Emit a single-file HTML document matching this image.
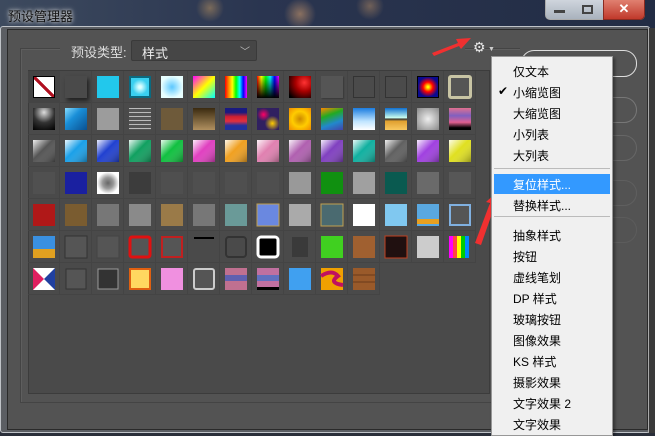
<!DOCTYPE html>
<html><head><meta charset="utf-8"><style>
*{margin:0;padding:0;box-sizing:border-box}
body{width:655px;height:433px;overflow:hidden;position:relative;background:#2a2f3a;font-family:"Liberation Sans","Noto Sans CJK SC",sans-serif}
.a{position:absolute}
.title{left:0;top:0;width:655px;height:30px;background:radial-gradient(circle at 210px 8px,#7a6a5a 0,transparent 14px),radial-gradient(circle at 300px 14px,#8a7060 0,transparent 16px),radial-gradient(circle at 370px 6px,#706058 0,transparent 14px),linear-gradient(90deg,#3d4a5e,#2a3550 40%,#222c44)}
.frame{left:0;top:26px;width:650px;height:407px;background:#5b5e63;border:1px solid #bfc3c8;border-radius:3px}
.bodyp{left:7px;top:29px;width:641px;height:401px;background:#535353;border:1px solid #2a2a2a}
.cell{position:absolute;width:32px;height:32px;border-right:1px solid #444;border-bottom:1px solid #444}
.sw{position:absolute;left:5px;top:5px;width:22px;height:22px}
.mi{position:absolute;left:21px;font-size:12px;color:#000;white-space:nowrap}
</style></head><body>
<div class="a title"></div>
<div class="a" style="left:8px;top:6px;font-size:13px;color:#111;text-shadow:0 0 6px #ccc,0 0 3px #ddd">预设管理器</div>
<div class="a" style="left:545px;top:0;width:100px;height:20px;border:1px solid #aaa;border-top:none;border-radius:0 0 5px 5px;background:linear-gradient(#cfd5dd,#a9b2bd);"></div>
<div class="a" style="left:603px;top:0;width:42px;height:20px;background:linear-gradient(#e08070,#c0392b);border-radius:0 0 5px 0;border:1px solid #8a2a20;border-top:none;color:#fff;font-size:13px;text-align:center;font-weight:bold;line-height:18px">✕</div>
<div class="a" style="left:554px;top:10px;width:11px;height:3px;background:#444"></div>
<div class="a" style="left:582px;top:5px;width:11px;height:9px;border:2px solid #444"></div>
<div class="a frame"></div>
<div class="a bodyp"></div>
<div class="a" style="left:20px;top:48px;width:500px;height:355px;border:1px solid #444;border-right:none;box-shadow:1px 1px 0 #5e5e5e inset"></div>
<div class="a" style="left:60px;top:40px;width:405px;height:20px;background:#535353"></div>
<div class="a" style="left:71px;top:42px;font-size:13px;color:#ddd">预设类型:</div>
<div class="a" style="left:131px;top:40px;width:126px;height:21px;background:#464646;border:1px solid #3a3a3a;border-radius:2px;color:#eee;font-size:13px;padding:2px 0 0 10px">样式<span style="position:absolute;right:6px;top:2px;color:#bbb;font-size:10px">﹀</span></div>
<div class="a" style="left:473px;top:39px;font-size:14px;color:#e8e8e8">⚙</div>
<div class="a" style="left:488px;top:46px;font-size:7px;color:#ccc">▼</div>
<div class="a" style="left:28px;top:70px;width:462px;height:324px;background:#4a4a4a;border:1px solid #3c3c3c"></div>
<div class="a" id="g" style="left:28px;top:71px;width:448px;height:224px">
<div class="cell" style="left:0;top:0;background:#444"><div class="sw" style="background:linear-gradient(to top right,#fff 44%,#b01020 45%,#b01020 55%,#fff 56%);border:1px solid #000"></div></div>
<div class="cell" style="left:32px;top:0"><div class="sw" style="background:#4a4a4a;box-shadow:2px 3px 4px #222"></div></div>
<div class="cell" style="left:64px;top:0"><div class="sw" style="background:#22c8ec"></div></div>
<div class="cell" style="left:96px;top:0"><div class="sw" style="background:radial-gradient(#dff 10%,#3ad0f0 60%);border:2px solid #0b6a80"></div></div>
<div class="cell" style="left:128px;top:0"><div class="sw" style="background:radial-gradient(#6cf 5%,#e8ffff 70%)"></div></div>
<div class="cell" style="left:160px;top:0"><div class="sw" style="background:linear-gradient(135deg,#f0f,#ff0 50%,#0ff)"></div></div>
<div class="cell" style="left:192px;top:0"><div class="sw" style="background:linear-gradient(90deg,#f00,#f80,#ff0,#0f0,#0ff,#00f,#f0f)"></div></div>
<div class="cell" style="left:224px;top:0"><div class="sw" style="background:linear-gradient(transparent,#000),linear-gradient(90deg,#f00,#ff0,#0f0,#0ff,#00f,#f0f)"></div></div>
<div class="cell" style="left:256px;top:0"><div class="sw" style="background:radial-gradient(circle at 70% 30%,#f33,#a00 40%,#000 90%)"></div></div>
<div class="cell" style="left:288px;top:0"><div class="sw" style="background:#555;box-shadow:1px 1px 1px #3a3a3a"></div></div>
<div class="cell" style="left:320px;top:0"><div class="sw" style="background:#4b4b4b;border:1px solid #333"></div></div>
<div class="cell" style="left:352px;top:0"><div class="sw" style="background:#4b4b4b;border:1px solid #333"></div></div>
<div class="cell" style="left:384px;top:0"><div class="sw" style="background:radial-gradient(#ff0 5%,#f00 35%,#0a0a90 70%);border:1px solid #000"></div></div>
<div class="cell" style="left:416px;top:0"><div class="sw" style="left:4px;top:4px;width:24px;height:24px;background:#555;border:3px solid #c8c4a4;border-radius:3px"></div></div>

<div class="cell" style="left:0;top:32px"><div class="sw" style="background:radial-gradient(circle at 50% 20%,#ddd,#333 50%,#000)"></div></div>
<div class="cell" style="left:32px;top:32px"><div class="sw" style="background:linear-gradient(135deg,#8df,#1a8fd8 40%,#0a5090)"></div></div>
<div class="cell" style="left:64px;top:32px"><div class="sw" style="background:#9c9c9c"></div></div>
<div class="cell" style="left:96px;top:32px"><div class="sw" style="background:repeating-linear-gradient(#bbb 0 1px,#555 1px 4px)"></div></div>
<div class="cell" style="left:128px;top:32px"><div class="sw" style="background:#6e5a3a"></div></div>
<div class="cell" style="left:160px;top:32px"><div class="sw" style="background:linear-gradient(#3a2a10,#b09060)"></div></div>
<div class="cell" style="left:192px;top:32px"><div class="sw" style="background:linear-gradient(#1a1a80 20%,#d02030 40%,#e03040 60%,#2030a0 80%)"></div></div>
<div class="cell" style="left:224px;top:32px"><div class="sw" style="background:radial-gradient(circle at 30% 30%,#f06 0,transparent 30%),radial-gradient(circle at 70% 70%,#fc0 0,transparent 35%),#302060"></div></div>
<div class="cell" style="left:256px;top:32px"><div class="sw" style="background:radial-gradient(#c80,#fc0 50%,#e80)"></div></div>
<div class="cell" style="left:288px;top:32px"><div class="sw" style="background:linear-gradient(160deg,#f80,#2a2,#28c,#44a)"></div></div>
<div class="cell" style="left:320px;top:32px"><div class="sw" style="background:linear-gradient(#1b7de0,#bfe4ff 60%,#fff)"></div></div>
<div class="cell" style="left:352px;top:32px"><div class="sw" style="background:linear-gradient(#1070d0,#cfe 45%,#333 50%,#e0a030 60%,#f8c860)"></div></div>
<div class="cell" style="left:384px;top:32px"><div class="sw" style="background:radial-gradient(#eee,#888);"></div></div>
<div class="cell" style="left:416px;top:32px"><div class="sw" style="background:linear-gradient(#e07090 0,#8060c0 35%,#e06090 65%,#000 90%)"></div></div>
</div>
<svg class="a" style="left:28px;top:71px" width="460" height="230">
<defs>
<linearGradient id="gl" x1="0" y1="0" x2="1" y2="1"><stop offset="0" stop-color="#fff" stop-opacity=".9"/><stop offset=".45" stop-color="#fff" stop-opacity="0"/><stop offset="1" stop-color="#000" stop-opacity=".35"/></linearGradient>
<radialGradient id="rb"><stop offset="0" stop-color="#666"/><stop offset=".5" stop-color="#999"/><stop offset="1" stop-color="#fff"/></radialGradient>
</defs>
<g stroke="#444" stroke-width="1">
<line x1="0" y1="95.5" x2="448" y2="95.5"/><line x1="0" y1="127.5" x2="448" y2="127.5"/><line x1="0" y1="159.5" x2="448" y2="159.5"/><line x1="0" y1="191.5" x2="448" y2="191.5"/><line x1="0" y1="223.5" x2="352" y2="223.5"/>
</g>
<g>
<rect x="5" y="69" width="22" height="22" fill="#555"/><rect x="5" y="69" width="22" height="22" fill="url(#gl)"/>
<rect x="37" y="69" width="22" height="22" fill="#1aa0e8"/><rect x="37" y="69" width="22" height="22" fill="url(#gl)"/>
<rect x="69" y="69" width="22" height="22" fill="#2040d0"/><rect x="69" y="69" width="22" height="22" fill="url(#gl)"/>
<rect x="101" y="69" width="22" height="22" fill="#10a060"/><rect x="101" y="69" width="22" height="22" fill="url(#gl)"/>
<rect x="133" y="69" width="22" height="22" fill="#10c040"/><rect x="133" y="69" width="22" height="22" fill="url(#gl)"/>
<rect x="165" y="69" width="22" height="22" fill="#e040c0"/><rect x="165" y="69" width="22" height="22" fill="url(#gl)"/>
<rect x="197" y="69" width="22" height="22" fill="#f0a020"/><rect x="197" y="69" width="22" height="22" fill="url(#gl)"/>
<rect x="229" y="69" width="22" height="22" fill="#e080b0"/><rect x="229" y="69" width="22" height="22" fill="url(#gl)"/>
<rect x="261" y="69" width="22" height="22" fill="#b060b0"/><rect x="261" y="69" width="22" height="22" fill="url(#gl)"/>
<rect x="293" y="69" width="22" height="22" fill="#8040c0"/><rect x="293" y="69" width="22" height="22" fill="url(#gl)"/>
<rect x="325" y="69" width="22" height="22" fill="#10b0a0"/><rect x="325" y="69" width="22" height="22" fill="url(#gl)"/>
<rect x="357" y="69" width="22" height="22" fill="#606060"/><rect x="357" y="69" width="22" height="22" fill="url(#gl)"/>
<rect x="389" y="69" width="22" height="22" fill="#a040e0"/><rect x="389" y="69" width="22" height="22" fill="url(#gl)"/>
<rect x="421" y="69" width="22" height="22" fill="#e0e020"/><rect x="421" y="69" width="22" height="22" fill="url(#gl)"/>
</g>
<g>
<rect x="5" y="101" width="22" height="22" fill="#505050"/>
<rect x="37" y="101" width="22" height="22" fill="#1a20a0"/>
<rect x="69" y="101" width="22" height="22" fill="url(#rb)"/>
<rect x="101" y="101" width="22" height="22" fill="#3c3c3c"/>
<rect x="133" y="101" width="22" height="22" fill="#4f4f4f"/>
<rect x="165" y="101" width="22" height="22" fill="#4f4f4f"/>
<rect x="197" y="101" width="22" height="22" fill="#4f4f4f"/>
<rect x="229" y="101" width="22" height="22" fill="#4f4f4f"/>
<rect x="261" y="101" width="22" height="22" fill="#999"/>
<rect x="293" y="101" width="22" height="22" fill="#109010"/>
<rect x="325" y="101" width="22" height="22" fill="#a0a0a0"/>
<rect x="357" y="101" width="22" height="22" fill="#0a5a50"/>
<rect x="389" y="101" width="22" height="22" fill="#6a6a6a"/>
<rect x="421" y="101" width="22" height="22" fill="#575757"/>
</g>
<g>
<rect x="5" y="133" width="22" height="22" fill="#b01818"/>
<rect x="37" y="133" width="22" height="22" fill="#7a5c30"/>
<rect x="69" y="133" width="22" height="22" fill="#777"/>
<rect x="101" y="133" width="22" height="22" fill="#8a8a8a"/>
<rect x="133" y="133" width="22" height="22" fill="#9a7a48"/>
<rect x="165" y="133" width="22" height="22" fill="#777"/>
<rect x="197" y="133" width="22" height="22" fill="#6a9a98"/>
<rect x="229" y="133" width="22" height="22" fill="#6a88e0" stroke="#c0a050"/>
<rect x="261" y="133" width="22" height="22" fill="#aaa"/>
<rect x="293" y="133" width="22" height="22" fill="#4a6a70" stroke="#c0a050"/>
<rect x="325" y="133" width="22" height="22" fill="#fff"/>
<rect x="357" y="133" width="22" height="22" fill="#80c8f0"/>
<rect x="389" y="133" width="22" height="22" fill="#5aa8e0"/><rect x="389" y="148" width="22" height="5" fill="#e8a020"/>
<rect x="422" y="134" width="20" height="20" fill="#555" stroke="#80b0e0" stroke-width="2"/>
</g>
<g>
<rect x="5" y="165" width="22" height="22" fill="#3a90e0"/><rect x="5" y="178" width="22" height="9" fill="#e0a020"/>
<rect x="37" y="165" width="22" height="22" fill="#555" stroke="#333"/>
<rect x="69" y="165" width="22" height="22" fill="#555" stroke="#444"/>
<rect x="102" y="166" width="20" height="20" fill="#555" stroke="#e01010" stroke-width="3" rx="2"/>
<rect x="134" y="166" width="20" height="20" fill="#555" stroke="#c02020" stroke-width="2"/>
<rect x="167" y="167" width="18" height="20" fill="#4a4a4a"/><rect x="166" y="166" width="20" height="2" fill="#000"/>
<rect x="198" y="166" width="20" height="20" fill="#4a4a4a" stroke="#333" stroke-width="2" rx="3"/>
<rect x="230" y="166" width="20" height="20" fill="#000" stroke="#fff" stroke-width="3" rx="3"/>
<rect x="264" y="166" width="16" height="20" fill="#3a3a3a"/>
<rect x="293" y="165" width="22" height="22" fill="#40d020"/>
<rect x="325" y="165" width="22" height="22" fill="#a06030"/>
<rect x="357" y="165" width="22" height="22" fill="#201010" stroke="#c04020"/>
<rect x="389" y="165" width="22" height="22" fill="#ccc"/>
<rect x="421" y="165" width="4" height="22" fill="#f0f"/><rect x="425" y="165" width="4" height="22" fill="#f44"/><rect x="429" y="165" width="4" height="22" fill="#ff0"/><rect x="433" y="165" width="4" height="22" fill="#0c0"/><rect x="437" y="165" width="4" height="22" fill="#08f"/>
</g>
<g>
<rect x="5" y="197" width="22" height="22" fill="#fff"/><polygon points="5,197 16,208 5,219" fill="#e02060"/><polygon points="27,197 16,208 27,219" fill="#2040a0"/>
<rect x="38" y="198" width="20" height="20" fill="#555" stroke="#333"/>
<rect x="70" y="198" width="20" height="20" fill="#333" stroke="#999"/>
<rect x="102" y="198" width="20" height="20" fill="#ffd860" stroke="#e06010" stroke-width="2"/>
<rect x="133" y="197" width="22" height="22" fill="#f090e0"/>
<rect x="166" y="198" width="20" height="20" fill="#555" stroke="#ccc" stroke-width="2" rx="2"/>
<rect x="197" y="197" width="22" height="22" fill="#c07090"/><rect x="197" y="204" width="22" height="6" fill="#6060b0"/>
<rect x="229" y="197" width="22" height="22" fill="#c070a0"/><rect x="229" y="204" width="22" height="6" fill="#6070c0"/><rect x="229" y="216" width="22" height="3" fill="#000"/>
<rect x="261" y="197" width="22" height="22" fill="#40a0f0"/>
<rect x="293" y="197" width="22" height="22" fill="#f0a000"/><path d="M293 205 Q304 198 310 205 Q300 212 315 214" stroke="#c01060" stroke-width="4" fill="none"/>
<rect x="325" y="197" width="22" height="22" fill="#9a5a2a"/><line x1="325" y1="204" x2="347" y2="204" stroke="#6a3a1a"/><line x1="325" y1="211" x2="347" y2="211" stroke="#6a3a1a"/>
</g>
<g stroke="#444"><line x1="31.5" y1="0" x2="31.5" y2="224"/><line x1="63.5" y1="0" x2="63.5" y2="224"/><line x1="95.5" y1="0" x2="95.5" y2="224"/><line x1="127.5" y1="0" x2="127.5" y2="224"/><line x1="159.5" y1="0" x2="159.5" y2="224"/><line x1="191.5" y1="0" x2="191.5" y2="224"/><line x1="223.5" y1="0" x2="223.5" y2="224"/><line x1="255.5" y1="0" x2="255.5" y2="224"/><line x1="287.5" y1="0" x2="287.5" y2="224"/><line x1="319.5" y1="0" x2="319.5" y2="224"/><line x1="351.5" y1="0" x2="351.5" y2="224"/><line x1="383.5" y1="0" x2="383.5" y2="192"/><line x1="415.5" y1="0" x2="415.5" y2="192"/><line x1="447.5" y1="0" x2="447.5" y2="192"/></g>
</svg>
<div class="a" style="left:521px;top:50px;width:116px;height:27px;border:1px solid #ddd;border-radius:13px"></div>
<div class="a" style="left:521px;top:97px;width:116px;height:26px;border:1px solid #777;border-radius:13px"></div>
<div class="a" style="left:521px;top:135px;width:116px;height:26px;border:1px solid #666;border-radius:13px"></div>
<div class="a" style="left:521px;top:180px;width:116px;height:26px;border:1px solid #5f5f5f;border-radius:13px"></div>
<div class="a" style="left:521px;top:217px;width:116px;height:26px;border:1px solid #5c5c5c;border-radius:13px"></div>
<div class="a" style="left:648px;top:28px;width:7px;height:405px;background:#3a3a3a;border-left:1px solid #aaa"></div>
<svg class="a" style="left:0;top:0" width="655" height="433">
<polygon points="432,53 458,43 456,39 471,38 461,49 459,46 434,56" fill="#f03030"/>
<polygon points="475,243 490,203 486,202 498,191 500,207 495,205 481,245" fill="#f03030"/>
</svg>
<div class="a" style="left:491px;top:56px;width:122px;height:380px;background:#f0f0f0;border:1px solid #979797;box-shadow:2px 2px 3px rgba(0,0,0,.4)">
<div class="mi" style="top:6px">仅文本</div>
<div class="a" style="left:6px;top:27px;font-size:12px">✔</div>
<div class="mi" style="top:27px">小缩览图</div>
<div class="mi" style="top:48px">大缩览图</div>
<div class="mi" style="top:69px">小列表</div>
<div class="mi" style="top:90px">大列表</div>
<div class="a" style="left:2px;top:111px;width:116px;height:1px;background:#bbb"></div>
<div class="a" style="left:2px;top:117px;width:116px;height:20px;background:#3399ff"></div>
<div class="mi" style="top:119px;color:#fff">复位样式...</div>
<div class="mi" style="top:140px">替换样式...</div>
<div class="a" style="left:2px;top:159px;width:116px;height:1px;background:#bbb"></div>
<div class="mi" style="top:170px">抽象样式</div>
<div class="mi" style="top:191px">按钮</div>
<div class="mi" style="top:212px">虚线笔划</div>
<div class="mi" style="top:233px">DP 样式</div>
<div class="mi" style="top:254px">玻璃按钮</div>
<div class="mi" style="top:275px">图像效果</div>
<div class="mi" style="top:296px">KS 样式</div>
<div class="mi" style="top:317px">摄影效果</div>
<div class="mi" style="top:338px">文字效果 2</div>
<div class="mi" style="top:359px">文字效果</div>
</div>
</body></html>
